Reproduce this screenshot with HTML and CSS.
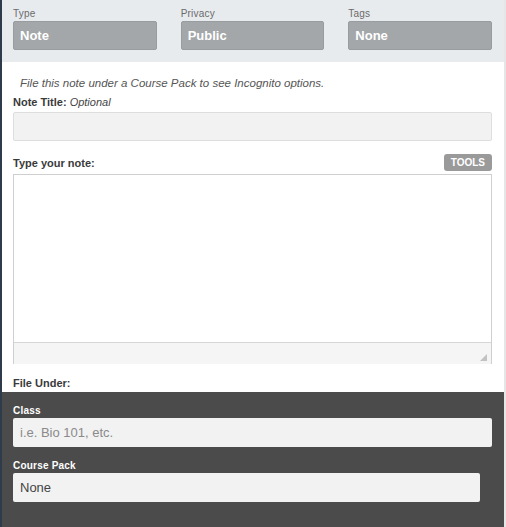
FILE: index.html
```html
<!DOCTYPE html>
<html>
<head>
<meta charset="utf-8">
<link rel="stylesheet" href="styles.css">
</head>
<body>
<div class="page">
  <div class="topbar">
    <div class="field">
      <div class="mini-label">Type</div>
      <div class="pick">Note</div>
    </div>
    <div class="field">
      <div class="mini-label">Privacy</div>
      <div class="pick">Public</div>
    </div>
    <div class="field">
      <div class="mini-label">Tags</div>
      <div class="pick">None</div>
    </div>
  </div>
  <div class="body">
    <p class="hint">File this note under a Course Pack to see Incognito options.</p>
    <div class="label">Note Title: <em>Optional</em></div>
    <div class="text-input"></div>
    <div class="note-head">
      <div class="label">Type your note:</div>
      <div class="tools">TOOLS</div>
    </div>
    <div class="editor">
      <div class="editor-area"></div>
      <div class="editor-foot"><span class="grip"></span></div>
    </div>
    <div class="label file-under">File Under:</div>
  </div>
  <div class="dark">
    <div class="dlabel">Class</div>
    <div class="dinput placeholder">i.e. Bio 101, etc.</div>
    <div class="dlabel">Course Pack</div>
    <div class="dinput select">None</div>
  </div>
</div>
</body>
</html>
```

FILE: styles.css
```css
html, body {
  margin: 0;
  padding: 0;
  height: 100%;
}
body {
  font-family: "Liberation Sans", Arial, sans-serif;
  background: #fff;
}
.page {
  min-height: 100%;
  box-sizing: border-box;
  border-left: 2px solid #2d3b4b;
  border-right: 2px solid #e6e6e6;
  display: flex;
  flex-direction: column;
}
.topbar {
  background: #e8ebee;
  padding: 8px 12px 12px 11px;
  display: grid;
  grid-template-columns: 1fr 1fr 1fr;
  column-gap: 24px;
}
.mini-label {
  font-size: 10px;
  color: #6a6a6a;
  line-height: 12px;
  height: 13px;
  letter-spacing: 0.2px;
}
.pick {
  background: #a4a7aa;
  border: 1px solid #999c9f;
  border-radius: 2px;
  color: #fff;
  font-weight: bold;
  font-size: 13px;
  height: 27px;
  line-height: 28px;
  padding: 0 6px;
}
.body {
  padding: 0 12px 0 11px;
}
.hint {
  margin: 14px 0 0 7px;
  font-style: italic;
  font-size: 11.5px;
  color: #555;
  line-height: 14px;
}
.label {
  font-size: 11px;
  font-weight: bold;
  color: #3a3a3a;
  line-height: 13px;
}
.label em {
  font-weight: normal;
  color: #444;
}
.body > .label {
  margin-top: 6px;
}
.text-input {
  margin-top: 3px;
  height: 27px;
  background: #f2f2f2;
  border: 1px solid #dedede;
  border-radius: 2px;
}
.note-head {
  margin-top: 13px;
  display: flex;
  justify-content: space-between;
  align-items: center;
}
.note-head .label {
  margin-top: 2px;
}
.tools {
  background: #9a9a9a;
  color: #fff;
  font-size: 10px;
  font-weight: bold;
  border-radius: 3px;
  padding: 0 7px;
  height: 17px;
  line-height: 17px;
}
.editor {
  margin-top: 3px;
  border: 1px solid #cfcfcf;
  border-bottom: none;
}
.editor-area {
  height: 167px;
  background: #fff;
  border-bottom: 1px solid #d6d6d6;
}
.editor-foot {
  height: 21px;
  background: #f5f5f5;
  position: relative;
}
.grip {
  position: absolute;
  right: 4px;
  bottom: 3px;
  width: 0;
  height: 0;
  border-left: 7px solid transparent;
  border-bottom: 7px solid #c2c2c2;
}
.body > .file-under {
  margin-top: 13px;
  height: 15px;
}
.dark {
  flex: 1;
  background: #4b4b4b;
  padding: 13px 12px 20px 11px;
}
.dlabel {
  color: #fff;
  font-size: 10px;
  font-weight: bold;
  line-height: 12px;
  letter-spacing: 0.2px;
}
.dinput {
  margin-top: 1px;
  height: 29px;
  line-height: 29px;
  background: #f2f2f2;
  border-radius: 2px;
  font-size: 13px;
  padding: 0 7px;
  box-sizing: border-box;
  margin-bottom: 13px;
}
.placeholder {
  color: #8a8a8a;
}
.select {
  color: #444;
  margin-right: 12px;
}
```
